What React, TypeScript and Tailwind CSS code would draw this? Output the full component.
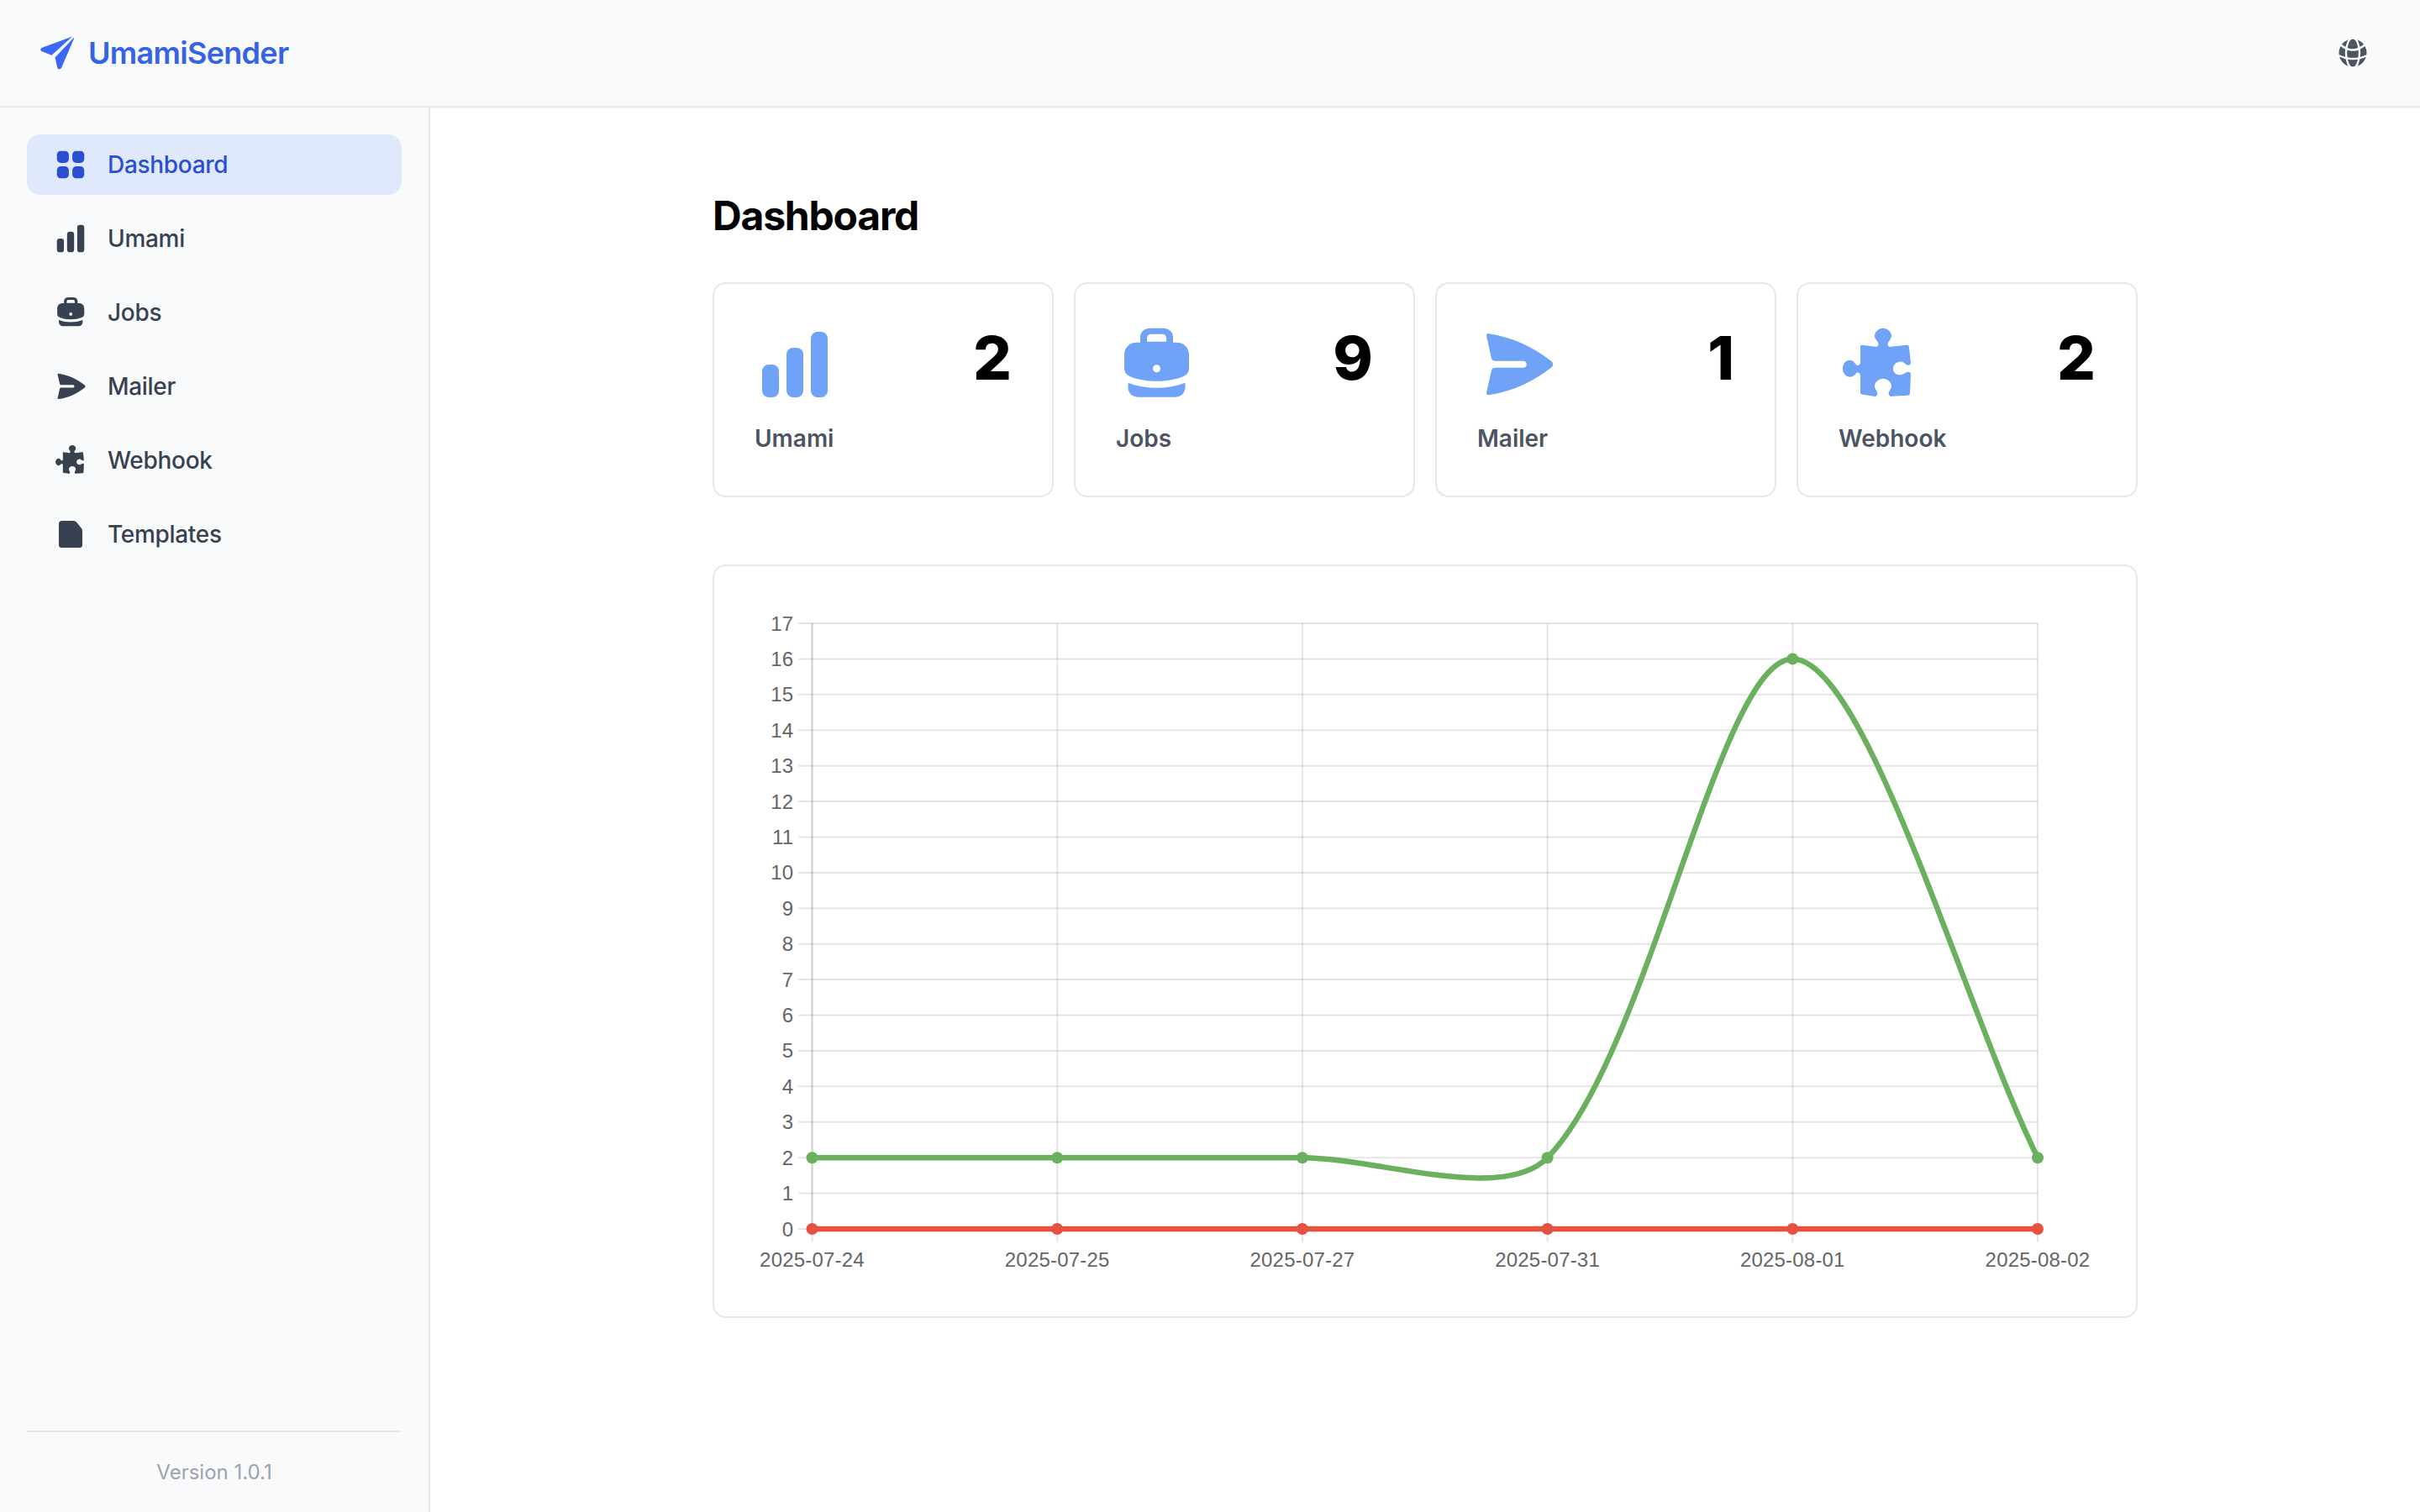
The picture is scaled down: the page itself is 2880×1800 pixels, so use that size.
import React from 'react';

type IconProps = { className?: string };

// All nav / stat icons share a 96 unit box
const GridIcon: React.FC<IconProps> = ({ className }) => (
  <svg viewBox="0 0 96 96" fill="currentColor" className={className}>
    <rect x="9" y="9" width="34" height="34" rx="11" />
    <rect x="53" y="9" width="34" height="34" rx="11" />
    <rect x="9" y="53" width="34" height="34" rx="11" />
    <rect x="53" y="53" width="34" height="34" rx="11" />
  </svg>
);

const BarsIcon: React.FC<IconProps> = ({ className }) => (
  <svg viewBox="0 0 96 96" fill="currentColor" className={className}>
    <rect x="9" y="48" width="20" height="39" rx="8" />
    <rect x="38" y="28" width="20" height="59" rx="8" />
    <rect x="67" y="9" width="20" height="78" rx="8" />
  </svg>
);

const BriefcaseIcon: React.FC<IconProps> = ({ className }) => (
  <svg viewBox="0 0 96 96" fill="currentColor" className={className}>
    <g transform="translate(10 4.7)">
      <path
        fillRule="evenodd"
        d="M19 17V11C19 4 24 0 31 0H46C53 0 58 4 58 11V17H62C71 17 77 23 77 32V48C77 52 75 55 71 57C62 61 50 63 38.5 63C27 63 15 61 6 57C2 55 0 52 0 48V32C0 23 6 17 15 17ZM27 16H50V12C50 9 48 7 45 7H32C29 7 27 9 27 12ZM38.5 43.5A4.5 4.5 0 1 0 38.5 52.5A4.5 4.5 0 1 0 38.5 43.5Z"
      />
      <path d="M4.5 65C15 69 27 71 38.5 71C50 71 62 69 72.5 65V70C72.5 77 68 82 60 82H17C9 82 4.5 77 4.5 70Z" />
    </g>
  </svg>
);

const SendIcon: React.FC<IconProps> = ({ className }) => (
  <svg viewBox="0 0 96 96" fill="currentColor" className={className}>
    <g transform="translate(11 10.7)">
      <path d="M3 .5C27 4 55 15 78 34C79.5 35.5 79.5 38.5 78 40C55 59 27 70 3 73.5C1 74 0 72.5 0 71L6 44C6.5 42 8 41 11 41H44C49 41 49 33 44 33H11C8 33 6.5 32 6 30L0 3C0 1.5 1 0 3 .5Z" />
    </g>
  </svg>
);

const PuzzleIcon: React.FC<IconProps> = ({ className }) => (
  <svg viewBox="0 0 96 96" fill="currentColor" className={className}>
    <g transform="translate(5 4.7)">
      <path d="M21 22C21 20.5 22 20 23 20L39 22C42 22 43 20 42 17C40 14 38 12 38 9C38 4 43 0 48 0C53 0 58 4 58 9C58 12 56 14 54 17C53 20 54 22 57 22L76 20C78 20 79 21 79 23L81 41C81 43 80 44 78 44C75 44 74 41 71 40C66 39 60 42 60 48C60 54 66 57 71 55C74 54 75 52 78 52C80 52 81 53 81 55L80 77C80 79 79 80 77 80L59 81C56 82 54 79 55 76C56 73 58 71 58 69C58 64 53 60 48 60C43 60 38 64 38 69C38 71 40 74 41 76C42 79 40 82 37 81L24 79C22 79 21 78 21 76L21 57C21 54 19 52 17 53C14 55 13 58 9 58C4 58 0 54 0 48C0 42 4 38 9 38C13 38 14 42 17 44C19 45 21 43 21 41Z" />
    </g>
  </svg>
);

const FileIcon: React.FC<IconProps> = ({ className }) => (
  <svg viewBox="0 0 96 96" fill="currentColor" className={className}>
    <g transform="translate(14.4 9.6) scale(2.4)">
      <path d="M4 0H18C19 0 20 .5 21 1.5L27 9C27.7 10 28 11 28 12V29C28 31 26.5 32 25 32H3C1.5 32 0 31 0 29V3C0 1 2 0 4 0Z" />
    </g>
  </svg>
);

const PlaneLogo: React.FC<IconProps> = ({ className }) => (
  <svg viewBox="0 0 40 40" fill="currentColor" className={className}>
    <path d="M38 .4L1.5 14C-.3 15-.3 17 1.5 18L13.5 22.7Z" />
    <path d="M39.6 2L17.5 25.5L20.3 37.5C21 40 24 40 25 38L40 3C40.2 2 40 1.5 39.6 2Z" />
  </svg>
);

const GlobeIcon: React.FC<IconProps> = ({ className }) => (
  <svg viewBox="0 0 34 34" className={className}>
    <circle cx="17" cy="17" r="16.5" fill="#4b5563" />
    <g fill="none" stroke="#f9fafb" strokeWidth="2.4">
      <ellipse cx="17" cy="17" rx="8" ry="18" />
      <path d="M1 6Q17 21 33 6" />
      <path d="M0 20Q17 28 34 20" />
    </g>
  </svg>
);

const NAV_ITEMS = [
  { label: 'Dashboard', icon: GridIcon, active: true },
  { label: 'Umami', icon: BarsIcon },
  { label: 'Jobs', icon: BriefcaseIcon },
  { label: 'Mailer', icon: SendIcon },
  { label: 'Webhook', icon: PuzzleIcon },
  { label: 'Templates', icon: FileIcon },
];

const STATS = [
  { label: 'Umami', value: 2, icon: BarsIcon },
  { label: 'Jobs', value: 9, icon: BriefcaseIcon },
  { label: 'Mailer', value: 1, icon: SendIcon },
  { label: 'Webhook', value: 2, icon: PuzzleIcon },
];

// Chart geometry, in page pixels
const LEFT = 966.5;
const RIGHT = 2425;
const TOP = 742;
const BOTTOM = 1463;
const MAX_Y = 17;
const DATES = ['2025-07-24', '2025-07-25', '2025-07-27', '2025-07-31', '2025-08-01', '2025-08-02'];
const GREEN = [2, 2, 2, 2, 16, 2];
const RED = [0, 0, 0, 0, 0, 0];

const xAt = (i: number) => LEFT + (i * (RIGHT - LEFT)) / (DATES.length - 1);
const yAt = (v: number) => BOTTOM - (v * (BOTTOM - TOP)) / MAX_Y;

// Same spline as a line chart
function splinePath(values: number[]) {
  const pts = values.map((v, i) => ({ x: xAt(i), y: yAt(v) }));
  const tension = 0.3;
  const controls = pts.map((cur, i) => {
    const prev = pts[i - 1] ?? cur;
    const next = pts[i + 1] ?? cur;
    const d01 = Math.hypot(cur.x - prev.x, cur.y - prev.y);
    const d12 = Math.hypot(next.x - cur.x, next.y - cur.y);
    const s01 = d01 / (d01 + d12) || 0;
    const s12 = d12 / (d01 + d12) || 0;
    const clampY = (y: number) => Math.min(BOTTOM, Math.max(TOP, y));
    return {
      inX: cur.x - tension * s01 * (next.x - prev.x),
      inY: clampY(cur.y - tension * s01 * (next.y - prev.y)),
      outX: cur.x + tension * s12 * (next.x - prev.x),
      outY: clampY(cur.y + tension * s12 * (next.y - prev.y)),
    };
  });
  let d = `M${pts[0].x} ${pts[0].y}`;
  for (let i = 1; i < pts.length; i++) {
    d += ` C${controls[i - 1].outX} ${controls[i - 1].outY} ${controls[i].inX} ${controls[i].inY} ${pts[i].x} ${pts[i].y}`;
  }
  return d;
}

const Chart: React.FC = () => {
  const grid = 'rgba(0,0,0,0.1)';
  const yTicks = Array.from({ length: MAX_Y + 1 }, (_, i) => i);
  return (
    <svg viewBox="850 674 1692 893" className="block h-[893px] w-full">
      {yTicks.map((v) => (
        <g key={v}>
          <line x1={950} x2={RIGHT} y1={yAt(v)} y2={yAt(v)} stroke={grid} strokeWidth={2} />
          <text
            x={944}
            y={yAt(v)}
            textAnchor="end"
            dominantBaseline="central"
            fontSize={24}
            fill="#666666"
            fontFamily="'Liberation Sans', Arial, sans-serif"
          >
            {v}
          </text>
        </g>
      ))}
      {DATES.map((date, i) => (
        <g key={date}>
          <line x1={xAt(i)} x2={xAt(i)} y1={TOP} y2={1479} stroke={grid} strokeWidth={2} />
          <text
            x={xAt(i)}
            y={1499}
            textAnchor="middle"
            dominantBaseline="central"
            fontSize={24}
            letterSpacing={0.2}
            fill="#666666"
            fontFamily="'Liberation Sans', Arial, sans-serif"
          >
            {date}
          </text>
        </g>
      ))}
      <line x1={LEFT} x2={LEFT} y1={TOP} y2={BOTTOM} stroke={grid} strokeWidth={2} />
      <path d={splinePath(GREEN)} fill="none" stroke="#6bb05f" strokeWidth={6.5} />
      <path d={splinePath(RED)} fill="none" stroke="#e55241" strokeWidth={6.5} />
      {GREEN.map((v, i) => (
        <circle key={i} cx={xAt(i)} cy={yAt(v)} r={7} fill="#6bb05f" />
      ))}
      {RED.map((v, i) => (
        <circle key={i} cx={xAt(i)} cy={yAt(v)} r={7} fill="#e55241" />
      ))}
    </svg>
  );
};

const App: React.FC = () => {
  return (
    <div className="flex h-screen w-full flex-col overflow-hidden bg-white font-['Inter',sans-serif]">
      {/* Top bar */}
      <header className="flex h-[128px] shrink-0 items-center justify-between border-b-2 border-[#e5e7eb] bg-[#f9fafb] pl-[48px] pr-[63px] shadow-[0_1px_2px_rgba(0,0,0,0.05)]">
        <div className="flex items-center gap-[17px]">
          <PlaneLogo className="h-[40px] w-[40px] text-[#3b68f6]" />
          <span className="text-[36px] font-semibold leading-none tracking-[-0.7px] text-[#3662e3]">UmamiSender</span>
        </div>
        <GlobeIcon className="h-[34px] w-[34px]" />
      </header>

      <div className="flex min-h-0 flex-1">
        {/* Sidebar */}
        <aside className="flex w-[512px] shrink-0 flex-col justify-between border-r-2 border-[#e5e7eb] bg-[#f9fafb] px-[32px] pt-[32px]">
          <nav className="flex flex-col gap-[16px]">
            {NAV_ITEMS.map(({ label, icon: Icon, active }) => (
              <div
                key={label}
                className={
                  active
                    ? 'flex h-[72px] items-center gap-[24px] rounded-[16px] bg-[#dfe9fb] pl-[32px] text-[28px] font-medium tracking-[-0.3px] text-[#2a4fd0]'
                    : 'flex h-[72px] items-center gap-[24px] rounded-[16px] pl-[32px] text-[28px] font-medium tracking-[-0.3px] text-[#374151]'
                }
              >
                <Icon className="h-[40px] w-[40px] shrink-0" />
                <span>{label}</span>
              </div>
            ))}
          </nav>
          <div className="flex h-[97px] items-center justify-center border-t-2 border-[#e5e7eb] text-[24px] text-[#9ca3af]">
            Version 1.0.1
          </div>
        </aside>

        {/* Main content */}
        <main className="min-w-0 flex-1 px-[336px] pt-[96px]">
          <h1 className="mb-[46px] text-[48px] font-bold leading-[66px] tracking-[-1.2px] text-black">Dashboard</h1>
          <div className="mb-[80px] grid grid-cols-4 gap-[24px]">
            {STATS.map(({ label, value, icon: Icon }) => (
              <div key={label} className="flex h-[256px] flex-col rounded-[16px] border-2 border-[#e5e7eb] px-[48px] pt-[48px]">
                <div className="flex items-start justify-between">
                  <Icon className="h-[96px] w-[96px] text-[#70a3f7]" />
                  <span className="text-[72px] font-extrabold leading-[80px] text-black">{value}</span>
                </div>
                <span className="mt-[22px] text-[28px] font-semibold leading-[36px] text-[#4b5563]">{label}</span>
              </div>
            ))}
          </div>
          <div className="rounded-[16px] border-2 border-[#e5e7eb]">
            <Chart />
          </div>
        </main>
      </div>
    </div>
  );
};

export default App;
